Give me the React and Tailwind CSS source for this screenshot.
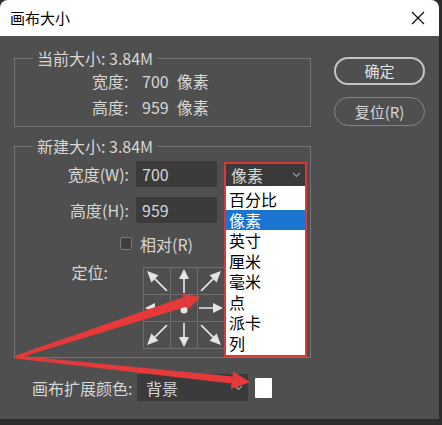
import React from 'react';

const units = ['百分比', '像素', '英寸', '厘米', '毫米', '点', '派卡', '列'];

// rotation of an up-pointing arrow for each cell of the anchor grid
const cells = [-45, 0, 45, -90, null, 90, -135, 180, 135];

const Arrow = ({ angle }) => {
  const diag = angle !== null && angle % 90 !== 0;
  return (
    <svg width="26" height="26" viewBox="0 0 26 26">
      {angle === null ? (
        <circle cx="13" cy="15" r="3.5" fill="#e6e6e6" />
      ) : (
        <g transform={`rotate(${angle} 13 13)`}>
          <line x1="13" y1={diag ? 27 : 25} x2="13" y2="9" stroke="#e4e4e4" strokeWidth="1.7" />
          <polygon
            points={diag ? '13,-1 8,10 18,10' : '13,1 8,11 18,11'}
            fill="#e4e4e4"
          />
        </g>
      )}
    </svg>
  );
};

const Chevron = () => (
  <svg width="9" height="6" viewBox="0 0 9 6">
    <polyline points="1,1 4.5,4.5 8,1" fill="none" stroke="#9a9a9a" strokeWidth="1.2" />
  </svg>
);

const App = () => {
  return (
    <div className="relative w-[442px] h-[425px] overflow-hidden bg-[#2c2c2c] font-['Noto_Sans_CJK_SC','Noto_Sans',sans-serif] text-[16px] text-[#d6d6d6]">
      <div className="flex flex-col w-[439px] h-[419px] rounded-t-[8px] overflow-hidden bg-[#4f4f4f]">
        {/* Title bar */}
        <div className="flex items-center justify-between h-[36px] bg-white pl-[10px] pr-[14px] text-black text-[15px]">
          <span className="leading-[20px]">画布大小</span>
          <svg width="14" height="14" viewBox="0 0 14 14">
            <line x1="1" y1="1" x2="13" y2="13" stroke="#111" strokeWidth="1.3" />
            <line x1="13" y1="1" x2="1" y2="13" stroke="#111" strokeWidth="1.3" />
          </svg>
        </div>

        {/* Body */}
        <div className="flex flex-col px-[14px]">
          <div className="flex">
            <div className="w-[300px] flex flex-col">
              {/* Current size */}
              <fieldset className="mt-[12px] h-[79px] border border-[#747474]">
                <legend className="ml-[18px] px-[4px] leading-[20px]">当前大小: 3.84M</legend>
                <div className="flex items-center h-[26px] pl-[77px]">
                  <span className="w-[50px]">宽度:</span>
                  <span>700</span>
                  <span className="ml-[8px]">像素</span>
                </div>
                <div className="flex items-center h-[26px] pl-[77px]">
                  <span className="w-[50px]">高度:</span>
                  <span>959</span>
                  <span className="ml-[8px]">像素</span>
                </div>
              </fieldset>

              {/* New size */}
              <fieldset className="mt-[9px] h-[222px] border border-[#747474]">
                <legend className="ml-[18px] px-[4px] leading-[20px]">新建大小: 3.84M</legend>
                <div className="flex items-center mt-[5px] h-[26px]">
                  <span className="w-[114px] text-right">宽度(W):</span>
                  <div className="ml-[7px] w-[81px] h-[26px] bg-[#3b3b3b] flex items-center pl-[6px]">700</div>
                  <div className="relative ml-[7px] w-[83px] h-[26px]">
                    <div className="absolute left-0 top-[1px] z-10 w-[83px] border-2 border-[#d9383b]">
                      <div className="flex items-center justify-between h-[22px] bg-[#3a3a3a] pl-[5px] pr-[4px]">
                        <span>像素</span>
                        <Chevron />
                      </div>
                      <div className="bg-white pt-[3px] pb-[2px] text-black">
                        {units.map((u) => (
                          <div
                            key={u}
                            className={`h-[20.5px] leading-[20.5px] px-[3px] ${u === '像素' ? 'bg-[#1b74cf] text-white' : ''}`}
                          >
                            {u}
                          </div>
                        ))}
                      </div>
                    </div>
                  </div>
                </div>
                <div className="flex items-center mt-[10px] h-[26px]">
                  <span className="w-[114px] text-right">高度(H):</span>
                  <div className="ml-[7px] w-[81px] h-[26px] bg-[#3b3b3b] flex items-center pl-[6px]">959</div>
                </div>
                <div className="flex items-center mt-[14px] h-[13px]">
                  <div className="ml-[105px] w-[12px] h-[13px] rounded-[2px] border border-[#7a7a7a] bg-[#3e3e3e]" />
                  <span className="ml-[8px] leading-[20px]">相对(R)</span>
                </div>
                <div className="flex items-start mt-[12px]">
                  <span className="w-[93px] text-right leading-[20px]">定位:</span>
                  <div className="ml-[35px] mt-[5px] grid grid-cols-3 gap-px p-px bg-[#6e6e6e]">
                    {cells.map((a, i) => (
                      <div key={i} className="w-[26px] h-[26px] bg-[#4f4f4f]">
                        <Arrow angle={a} />
                      </div>
                    ))}
                  </div>
                </div>
              </fieldset>
            </div>

            {/* Buttons */}
            <div className="ml-[23px] flex flex-col">
              <button className="mt-[21px] w-[91px] h-[28px] rounded-full border-2 border-[#c4c4c4] text-[#e2e2e2] text-[15px] leading-[20px]">
                确定
              </button>
              <button className="mt-[12px] w-[91px] h-[29px] rounded-full border-[1.5px] border-[#858585] text-[#d6d6d6] text-[15px] leading-[20px]">
                复位(R)
              </button>
            </div>
          </div>

          {/* Canvas extension colour */}
          <div className="flex items-center mt-[16px] h-[27px] pl-[18px]">
            <span className="w-[105px] leading-[20px]">画布扩展颜色:</span>
            <div className="flex items-center justify-between w-[111px] h-[27px] bg-[#3b3b3b] pl-[9px] pr-[5px]">
              <span>背景</span>
              <Chevron />
            </div>
            <div className="ml-[7px] w-[17px] h-[20px] bg-white rounded-[1px]" />
          </div>
        </div>
      </div>

      {/* Red annotation arrows */}
      <svg className="absolute inset-0 pointer-events-none" width="442" height="425" viewBox="0 0 442 425">
        <polygon points="16.5,358.4 15.5,355.6 183.2,297.2 186.4,306.8" fill="#e63a3a" />
        <polygon points="200,297 187.5,310 182,294" fill="#e63a3a" />
        <polygon points="15.8,358.5 16.2,355.5 232.6,376.6 231.6,383.6" fill="#e63a3a" />
        <polygon points="250,382 231,389 233,371.5" fill="#e63a3a" />
      </svg>
    </div>
  );
};

export default App;
